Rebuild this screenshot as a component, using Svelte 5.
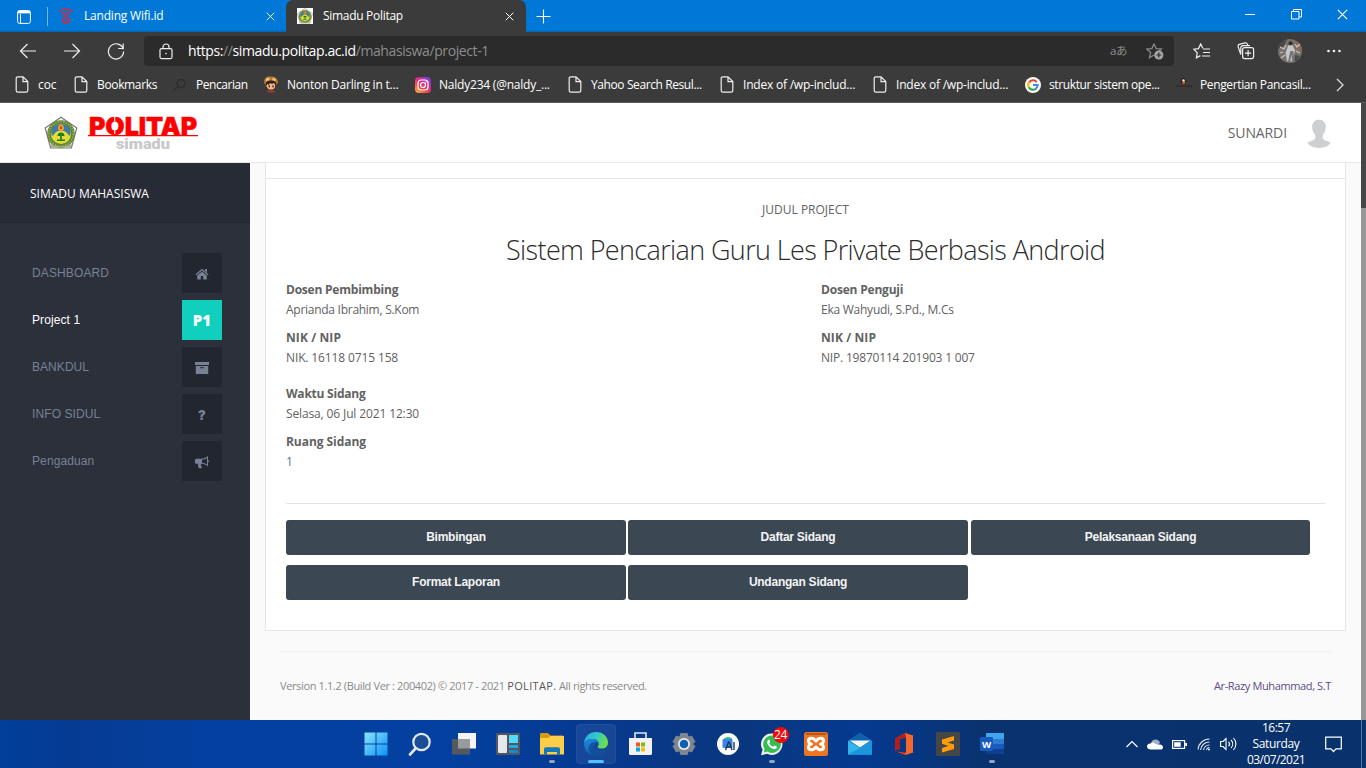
<script>
  const bookmarks = [
    { label: 'coc', icon: 'page', track: -0.1 },
    { label: 'Bookmarks', icon: 'page', track: -0.35 },
    { label: 'Pencarian', icon: 'search', track: -0.45 },
    { label: 'Nonton Darling in t...', icon: 'anime', track: -0.22 },
    { label: 'Naldy234 (@naldy_...', icon: 'insta', track: -0.22 },
    { label: 'Yahoo Search Resul...', icon: 'page', track: -0.4 },
    { label: 'Index of /wp-includ...', icon: 'page', track: -0.21 },
    { label: 'Index of /wp-includ...', icon: 'page', track: -0.21 },
    { label: 'struktur sistem ope...', icon: 'google', track: -0.37 },
    { label: 'Pengertian Pancasil...', icon: 'lamp', track: -0.37 }
  ];

  const menu = [
    { label: 'DASHBOARD', icon: 'home', track: 0.12 },
    { label: 'Project 1', icon: 'p1', active: true, track: 0.1 },
    { label: 'BANKDUL', icon: 'box', track: 0.05 },
    { label: 'INFO SIDUL', icon: 'help', track: 0.1 },
    { label: 'Pengaduan', icon: 'horn', track: 0.1 }
  ];

  const columns = [
    [
      { name: 'Dosen Pembimbing', value: 'Aprianda Ibrahim, S.Kom', a: -0.22, b: -0.27 },
      { name: 'NIK / NIP', value: 'NIK. 16118 0715 158', a: 0.1, b: -0.13 }
    ],
    [
      { name: 'Dosen Penguji', value: 'Eka Wahyudi, S.Pd., M.Cs', a: -0.2, b: -0.25 },
      { name: 'NIK / NIP', value: 'NIP. 19870114 201903 1 007', a: 0.1, b: -0.19 }
    ]
  ];

  const schedule = [
    { name: 'Waktu Sidang', value: 'Selasa, 06 Jul 2021 12:30', a: -0.23, b: -0.13 },
    { name: 'Ruang Sidang', value: '1', a: -0.05, b: 0, link: true }
  ];

  const actions = ['Bimbingan', 'Daftar Sidang', 'Pelaksanaan Sidang', 'Format Laporan', 'Undangan Sidang'];

  const apps = [
    'start', 'search', 'tasks', 'widgets', 'folder', 'edge', 'store', 'settings',
    'studio', 'whatsapp', 'xampp', 'mail', 'office', 'sublime', 'word'
  ];
  const running = ['folder', 'whatsapp', 'word'];
</script>

{#snippet crest()}
  <svg class="crest" viewBox="0 0 34 34">
    <path d="M17 1.2 32.8 12 27.4 32H6.6L1.2 12Z" fill="#fff" stroke="#777" stroke-width="1.2" />
    <circle cx="17" cy="18" r="13.8" fill="#5d8540" />
    <circle cx="17" cy="18" r="12.2" fill="none" stroke="#a9b83a" stroke-width="1.4" stroke-dasharray="1.4 1.3" />
    <circle cx="17" cy="18" r="10" fill="#e3dc35" />
    <path d="M8 20C6 11 11 8 17 8.500c6-.5 11 2.500 9 11.500-2-1-3-4-6-5h-6c-3 1-4 4-6 5Z" fill="#3f78ab" />
    <circle cx="17" cy="12" r="3" fill="#f4a91c" />
    <circle cx="17" cy="11.800" r="1.300" fill="#d8331c" />
    <path d="M17 16.500c2.500 0 3.500 1.800 3.500 3.500h-2.700v3.500H21V25h-8v-1.500h3.200V20h-2.700c0-1.700 1-3.500 3.500-3.500Z" fill="#237a25" />
    <path d="M6 27.500c5 3.500 17 3.500 22 0L26.800 31.300H7.200Z" fill="#a9ad86" />
  </svg>
{/snippet}

{#snippet x(size)}
  <svg width={size} height={size} viewBox="0 0 10 10" stroke="#fff" stroke-width="1.1"><path d="M.8.8l8.400 8.400M9.200.8.8 9.200" /></svg>
{/snippet}

<div class="screen">
  <header class="tabs">
    <div class="cell workspace">
      <svg width="14" height="14" viewBox="0 0 14 14" fill="none" stroke="#fff"><rect x=".6" y=".6" width="12.800" height="12.800" rx="2" /><path d="M.8 2.700h12.400M3.500 4v9" /><path d="M1 2h12" stroke-width="2.500" /></svg>
    </div>
    <div class="tab">
      <svg width="16" height="18" viewBox="0 0 16 18" fill="none" stroke="#d42b3e"><path d="M1.500 5c3-4.200 10-4.200 13 0M3.600 7c2-2.900 6.800-2.900 8.800 0M5.600 9c1-1.800 3.800-1.800 4.800 0" stroke-width="1.400" /><circle cx="8" cy="13.300" r="3" stroke-width="1.600" /><circle cx="8" cy="13.300" r=".7" /></svg>
      <span style:letter-spacing="-.2px">Landing Wifi.id</span>
      {@render x(9)}
    </div>
    <div class="tab open">
      <i class="favicon">{@render crest()}</i>
      <span style:letter-spacing="-.3px">Simadu Politap</span>
      {@render x(9)}
    </div>
    <div class="cell plus"><svg width="15" height="15" viewBox="0 0 15 15" stroke="#fff" stroke-width="1.100"><path d="M7.500.5v14M.5 7.500h14" /></svg></div>
    <div class="window">
      <svg width="10" height="10" viewBox="0 0 10 10" stroke="#fff"><path d="M0 5.500h10" /></svg>
      <svg width="11" height="11" viewBox="0 0 11 11" fill="none" stroke="#fff"><path d="M.5 2.500h7.500v7.500H.5ZM2.500 2.500V.5h8V8H8" /></svg>
      {@render x(11)}
    </div>
  </header>

  <nav class="toolbar">
    <div class="cell"><svg width="18" height="16" viewBox="0 0 18 16" fill="none" stroke="#eee" stroke-width="1.200"><path d="M17 8H1.500M8.500 1l-7 7 7 7" /></svg></div>
    <div class="cell"><svg width="18" height="16" viewBox="0 0 18 16" fill="none" stroke="#eee" stroke-width="1.200"><path d="M1 8h15.500M9.500 1l7 7-7 7" /></svg></div>
    <div class="cell"><svg width="18" height="18" viewBox="0 0 18 18" fill="none" stroke="#eee" stroke-width="1.200"><path d="M16.300 7.300A7.600 7.600 0 1 0 16.600 9.500M16.200 1.500v5h-5" /></svg></div>
    <div class="address">
      <svg width="14" height="17" viewBox="0 0 14 17" fill="none" stroke="#eee" stroke-width="1.200"><rect x="1" y="5.600" width="12" height="10" rx="1.500" /><path d="M4 5.500V4a3 3 0 0 1 6 0v1.500" /><circle cx="7" cy="10.600" r=".8" fill="#eee" stroke="none" /></svg>
      <span class="url"><b>https:</b>//<b>simadu.politap.ac.id</b>/mahasiswa/project-1</span>
      <span class="translate">aあ</span>
      <svg width="18" height="17" viewBox="0 0 18 17"><path d="M8 .8l2.100 4.800 5.300.4-4 3.500M8 .8 5.900 5.600.700 6l4 3.500-1.300 5.300L8 12" fill="none" stroke="#8d8d8d" stroke-width="1.200" /><circle cx="12.800" cy="12" r="4.600" fill="#a5a5a5" /><path d="M12.800 9.600v4.800M10.400 12h4.800" stroke="#2b2b2b" stroke-width="1.200" /></svg>
    </div>
    <div class="cell"><svg width="18" height="17" viewBox="0 0 18 17" fill="none" stroke="#eee" stroke-width="1.200"><path d="M9.800 5.300 7.700.9 5.500 5.600.8 6.200l3.400 3.500-.8 5.100 4-2.200M10 6h7M10 9.500h7M9 13h8" /></svg></div>
    <div class="cell"><svg width="18" height="18" viewBox="0 0 18 18" fill="none" stroke="#eee" stroke-width="1.200"><rect x="5.600" y="5.600" width="11" height="11" rx="2" /><path d="M11.100 8v6.200M8 11.100h6.200M3.800 12.500 1.200 5C.8 3.500 1.200 2.800 2.300 2.400L8 .9c1.200-.2 2 .2 2.400 1.200l.6 1.500M3.800 12.500V6c0-1.500 1-2.400 2.500-2.400H13" /></svg></div>
    <div class="cell"><svg width="24" height="24" viewBox="0 0 24 24"><clipPath id="round"><circle cx="12" cy="12" r="12" /></clipPath><g clip-path="url(#round)"><path fill="#77716b" d="M0 0h24v24H0z" /><path d="M0 0h9L6 7 0 10Z" fill="#4a494a" /><path d="M16 2h8v9l-5-2Z" fill="#8f6558" /><path d="M2 8l4 2 2-4M17 5l2 3 3-3M3 19l4-3M18 12l4 2M2 14l3-1" stroke="#c8c4bd" stroke-width="1.200" fill="none" /><circle cx="12.500" cy="4.200" r="2" fill="#332a28" /><path d="M10 6.500l4.500-.2 2.500 5-1 5-1.500 6H9L7.500 14Z" fill="#c6c5c7" /><path d="M12.200 12 10 23h2.200l1-7 1.300 7h2l-1-11Z" fill="#77777c" /><path d="M17 16l5 1-3 5h-2.500Z" fill="#4a4d4b" /></g></svg></div>
    <div class="cell"><svg width="14" height="4" viewBox="0 0 14 4" fill="#eee"><circle cx="1.500" cy="2" r="1.300" /><circle cx="7" cy="2" r="1.300" /><circle cx="12.500" cy="2" r="1.300" /></svg></div>
  </nav>

  <nav class="bookmarks">
    {#each bookmarks as b}
      <div class="bookmark">
        <i>
          {#if b.icon === 'page'}
            <svg width="16" height="17" viewBox="0 0 16 17" fill="none" stroke="#eee" stroke-width="1.200"><path d="M9 .8H4C2.700.8 2.200 1.500 2.200 2.500v12c0 1 .5 1.700 1.800 1.700h8c1.200 0 1.800-.7 1.800-1.700v-9ZM9 .8v4.900h4.800" /></svg>
          {:else if b.icon === 'search'}
            <svg width="16" height="16" viewBox="0 0 16 16" fill="none" stroke="#2c2c2c" stroke-width="1.300"><circle cx="9" cy="6.500" r="4" /><path d="m6 9.500-4 4" /></svg>
          {:else if b.icon === 'anime'}
            <svg width="16" height="17" viewBox="0 0 16 17"><path d="M1 6C1 2 4 0 8 .5c5-.3 7 3 7 6.500l-2 2-10 2Z" fill="#b47b2d" /><path d="M3 2.500l3-1 1 3-4 1ZM10 1.500l3 2-1 2-3-1Z" fill="#ebc77b" /><circle cx="8" cy="9.500" r="4.300" fill="#efb98c" /><path d="M2.500 11c0-6 2-6.500 5.500-6.500s6 1 5.500 6.500l-2.500-4-2 1-2-1-1 2-1.500-1Z" fill="#382015" /><path d="M5.500 9.500H7v1.800H5.500ZM9.300 9.500h1.500v1.800H9.300Z" fill="#382015" /><path d="M4 16.500c0-2.500 2-3 4-3s4 .5 4 3Z" fill="#923d28" /></svg>
          {:else if b.icon === 'insta'}
            <svg width="16" height="16" viewBox="0 0 16 16"><defs><linearGradient id="ig" x1="0" y1="1" x2=".8" y2="0"><stop stop-color="#ffc24a" /><stop offset=".35" stop-color="#f7503f" /><stop offset=".65" stop-color="#d32c91" /><stop offset="1" stop-color="#7a3fd0" /></linearGradient></defs><rect width="16" height="16" rx="4" fill="url(#ig)" /><g fill="none" stroke="#fff" stroke-width="1.200"><rect x="3" y="3" width="10" height="10" rx="3" /><circle cx="8" cy="8" r="2.500" /></g><circle cx="11" cy="5" r=".7" fill="#fff" /></svg>
          {:else if b.icon === 'google'}
            <svg width="16" height="16" viewBox="0 0 16 16"><circle cx="8" cy="8" r="8" fill="#fff" /><g fill="none" stroke-width="2.100"><path d="M11.700 5A4.700 4.700 0 0 0 4 5.500" stroke="#e94335" /><path d="M4 5.400a4.700 4.700 0 0 0 0 5.200" stroke="#fabb05" /><path d="M3.900 10.400a4.700 4.700 0 0 0 7.300 1" stroke="#34a853" /><path d="M11 11.500c1-.8 1.700-2 1.700-3.500H8" stroke="#4285f4" /></g></svg>
          {:else}
            <svg width="16" height="16" viewBox="0 0 16 16"><path d="M0 8.500h16v1.200H0z" fill="#2a2a2a" /><ellipse cx="7.500" cy="4.500" rx="2.600" ry="3.600" fill="#2e1712" /><circle cx="7.500" cy="3.500" r="1.300" fill="#f5ead5" /><path d="M6 5h3l-.5 2.500h-2Z" fill="#d8502a" /><circle cx="8.700" cy="5.200" r=".8" fill="#60b33d" /></svg>
          {/if}
        </i>
        <span style:letter-spacing="{b.track}px">{b.label}</span>
      </div>
    {/each}
    <svg class="more" width="8" height="14" viewBox="0 0 8 14" fill="none" stroke="#ddd" stroke-width="1.300"><path d="m1 1 6 6-6 6" /></svg>
  </nav>

  <div class="viewport">
    <div class="site">
      <header class="masthead">
        <div class="brand">
          {@render crest()}
          <svg class="wordmark" width="112" height="37" viewBox="0 0 112 37">
            <text x="1" y="20.700" textLength="108" lengthAdjust="spacingAndGlyphs" class="politap">POLITAP</text>
            <path d="M26.700 2v5.500M26.700 15v5" stroke="#fff" stroke-width="1.100" />
            <path d="M0 21.700h110" stroke="#f00" stroke-width="1.300" />
            <text x="28" y="34.500" textLength="54" lengthAdjust="spacingAndGlyphs" class="simadu">simadu</text>
          </svg>
        </div>
        <div class="user">
          <span>SUNARDI</span>
          <svg width="24" height="30" viewBox="0 0 24 30" fill="#cdcfd1"><path d="M12 .8c4.200 0 6.800 2.700 6.800 7 0 3.600-1.200 6.200-3 8-.6 3.500.2 5 2.600 5.700 2 .6 4 1 5.200 2.600C21 27.500 17 29 12 29S3 27.500.4 24.100c1.200-1.600 3.200-2 5.200-2.600 2.400-.7 3.200-2.200 2.600-5.700-1.800-1.800-3-4.400-3-8 0-4.300 2.600-7 6.800-7Z" /></svg>
        </div>
      </header>

      <div class="body">
        <aside>
          <div class="heading">SIMADU MAHASISWA</div>
          <ul>
            {#each menu as m}
              <li class:active={m.active}>
                <span style:letter-spacing="{m.track}px">{m.label}</span>
                <i>
                  {#if m.icon === 'home'}
                    <svg width="14" height="12" viewBox="0 0 14 12"><path d="M7 .8 13.500 6.300l-.8.9L7 2.500 1.300 7.200l-.8-.9ZM10 1h2v3.500l-2-1.700ZM7 3.400l4.800 4v4.100H8.200V8H5.800v3.500H2.200V7.400Z" /></svg>
                  {:else if m.icon === 'p1'}
                    P1
                  {:else if m.icon === 'box'}
                    <svg width="14" height="12" viewBox="0 0 14 12"><path fill-rule="evenodd" d="M0 0h14v3H0ZM.8 4h12.400v8H.8ZM5 5.200v1h4v-1Z" /></svg>
                  {:else if m.icon === 'help'}
                    <b>?</b>
                  {:else}
                    <svg width="14" height="13" viewBox="0 0 14 13"><path fill-rule="evenodd" d="M13 0v4.200a1 1 0 0 1 0 2V10.500C11 8.800 8.800 8 6.500 7.800c-1 .5-.8 1.400-.2 1.800-.5.9.2 1.300.8 2-.7 1-2.600 1-3.400.3-.4-1.300-1-2.500-.5-4.200H1.500C.6 7.700 0 7.200 0 6.200V4.300C0 3.400.6 2.700 1.500 2.700H6C8.700 2.700 11 1.600 13 0ZM12 2C10.300 3.100 8.700 3.600 7 3.700v3.100c1.700.1 3.300.7 5 1.800Z" /></svg>
                  {/if}
                </i>
              </li>
            {/each}
          </ul>
        </aside>

        <main>
          <section class="card">
            <div class="strip"></div>
            <div class="content">
              <p class="kicker">JUDUL PROJECT</p>
              <h1>Sistem Pencarian Guru Les Private Berbasis Android</h1>
              <div class="pair">
                {#each columns as col}
                  <dl>
                    {#each col as f}
                      <dt style:letter-spacing="{f.a}px">{f.name}</dt>
                      <dd style:letter-spacing="{f.b}px">{f.value}</dd>
                    {/each}
                  </dl>
                {/each}
              </div>
              <dl class="schedule">
                {#each schedule as f}
                  <dt style:letter-spacing="{f.a}px">{f.name}</dt>
                  <dd class:link={f.link} style:letter-spacing="{f.b}px">{f.value}</dd>
                {/each}
              </dl>
              <hr />
              <div class="actions">
                {#each actions as a}<button>{a}</button>{/each}
              </div>
            </div>
          </section>
          <footer>
            <span>Version 1.1.2 (Build Ver : 200402) © 2017 - 2021 <b>POLITAP.</b> All rights reserved.</span>
            <span class="author">Ar-Razy Muhammad, S.T</span>
          </footer>
        </main>
      </div>
    </div>
    <div class="scrollbar"><div></div></div>
  </div>

  <footer class="taskbar">
    <div class="apps">
      {#each apps as a}
        <div class="app" class:focused={a === 'edge'} class:running={running.includes(a)}>
          {#if a === 'start'}
            <svg viewBox="0 0 24 24"><defs><linearGradient id="win" x1="0" y1="0" x2="1" y2="1"><stop stop-color="#8ce4ff" /><stop offset="1" stop-color="#0a93f5" /></linearGradient></defs><path fill="url(#win)" d="M.5.500h11v11H.5ZM12.500.5h11v11h-11ZM.5 12.500h11v11H.5ZM12.500 12.500h11v11h-11Z" /></svg>
          {:else if a === 'search'}
            <svg viewBox="0 0 24 24" fill="none" stroke="#e3e7ef"><circle cx="13.500" cy="10" r="8.200" stroke-width="2.200" fill="#1c4e96" /><path d="m7.500 16.500-5.500 6" stroke-width="2.600" stroke-linecap="round" /></svg>
          {:else if a === 'tasks'}
            <svg viewBox="0 0 24 24"><path fill="#f4f4f6" d="M6 1h18v15.500H6z" /><path fill="#55585c" d="M0 7h18v15.500H0z" /><path fill="#989a9e" d="M6 7h12v9.500H6z" /></svg>
          {:else if a === 'widgets'}
            <svg viewBox="0 0 24 24"><rect y="1" width="24" height="22" rx="1" fill="#53575d" /><rect x="2" y="3" width="9" height="18" rx="1" fill="#e5e7ea" /><path fill="#50dcff" d="M13 3h9v8h-9z" /><path fill="#25abe5" d="M13 13h9v3h-9z" /><path fill="#158cd2" d="M13 18h9v3h-9z" /></svg>
          {:else if a === 'folder'}
            <svg viewBox="0 0 24 24"><path d="M0 2.500C0 1.500.5 1 1.500 1H8l2.500 2.500H22c1 0 2 .5 2 1.500v5H0Z" fill="#d99a08" /><path d="M0 6h8l2.500-2H24v18.500H0Z" fill="#fccd46" /><path d="M4 22.500V17c0-1 .8-1.700 2-1.700h12c1.200 0 2 .7 2 1.700v5.500h-3V20H7v2.500Z" fill="#1477bf" /></svg>
          {:else if a === 'edge'}
            <svg viewBox="0 0 24 24"><defs><linearGradient id="e1" x1="0" y1="0" x2="1" y2=".3"><stop stop-color="#2ba7e8" /><stop offset=".55" stop-color="#34c9c9" /><stop offset="1" stop-color="#6bdf4b" /></linearGradient><linearGradient id="e2" x1="0" y1="0" x2=".5" y2="1"><stop stop-color="#1b8bdd" /><stop offset="1" stop-color="#115bab" /></linearGradient></defs><path d="M0 11C.5 4.500 5.500 0 12 0c7 0 12 4.800 12 10.500 0 4-3 6-6.500 6-2.500 0-4-.8-4-1.600 0-.6 1.200-1.100 1.200-3C14.700 9 12 7 8.500 7 4 7 1 9 0 11Z" fill="url(#e1)" /><path d="M0 12C.3 9 3.500 7 8 7c3.500 0 6.500 2 6.700 4.800-.6-1-1.600-1.800-2.700-1.800-2 1-3 3-3 5 0 4 5 6 12.500 3-2 3.700-5.500 6-9.500 6C5 24 0 18.500 0 12Z" fill="url(#e2)" /><path d="M8.500 23.300C4.500 21 3.500 16 6 12.500c1.300-1.700 3.300-2.500 6-2.500-2 1-3 3-3 5 0 4.500 5 6.500 12.500 3-3 5-8 6.500-13 5.300Z" fill="#0d4a96" opacity=".75" /></svg>
          {:else if a === 'store'}
            <svg viewBox="0 0 24 24"><path d="M7 7V1h11v6" fill="none" stroke="#dfe7ef" stroke-width="1.600" /><path d="M1 6h23v15.500c0 1-.8 1.500-1.800 1.500H2.800C1.800 23 1 22.500 1 21.500Z" fill="#f2f2f4" /><path fill="#f35325" d="M8 10.500h4v4H8z" /><path fill="#81bc06" d="M13 10.500h4v4h-4z" /><path fill="#05a6f0" d="M8 15.500h4v4H8z" /><path fill="#ffba08" d="M13 15.500h4v4h-4z" /></svg>
          {:else if a === 'settings'}
            <svg viewBox="0 0 24 24"><path d="M8.500 1h7l1 3.500 3.500-.7 3.500 6L21 12l2.500 2.300-3.500 6-3.500-.8-1 3.500h-7l-1-3.500-3.500.8-3.500-6L3 12 .5 9.800l3.500-6 3.500.7Z" fill="#80868f" /><circle cx="12" cy="12" r="6" fill="#e8edf3" /><circle cx="12" cy="12" r="4.300" fill="#1060b4" /></svg>
          {:else if a === 'studio'}
            <svg viewBox="0 0 24 24"><circle cx="12" cy="12" r="11" fill="#fff" /><path d="M8 6.500c2-2 6-2 8 0V8H8Z" fill="#31c485" /><rect x="6.500" y="7" width="10" height="9" rx="1" fill="#3f82eb" /><path d="m9.500 18 3-8 1 .5 2.500 7.500M18 10v8M11 15h4" fill="none" stroke="#153b5b" stroke-width="1.400" /></svg>
          {:else if a === 'whatsapp'}
            <svg viewBox="0 0 24 24"><path d="M12 1.500A10.700 10.700 0 1 1 7 21.800L1 23.300l1.600-5.500A10.700 10.700 0 0 1 12 1.500Z" fill="#eef5ef" /><path d="M12 3.500a8.700 8.700 0 1 1-4.600 16l-3.700 1 1-3.500A8.700 8.700 0 0 1 12 3.500Z" fill="#34be51" /><path d="M9 7.500c.8 0 1 1.800 1.200 2.300 0 .6-1 1.100-.8 1.600.9 1.600 2.100 2.700 3.700 3.300.5.100 1-1.100 1.500-1.100.5.100 2.300.9 2.300 1.300-.1 1.600-1.600 2.400-3 2.200-3.500-.7-6-3.300-6.800-6.300C7 9.500 8 7.500 9 7.500Z" fill="#fff" /></svg>
            <em>24</em>
          {:else if a === 'xampp'}
            <svg viewBox="0 0 24 24"><rect width="24" height="24" rx="2.500" fill="#ed7522" /><path d="M2 1h20v2H2z" fill="#b9571a" /><path d="M12 9C9 5 4.500 5.500 4.500 8.800c0 2 1.500 3.200 3 3.200-1.500 0-3 1.200-3 3.200 0 3.300 4.500 3.800 7.500-.2 3 4 7.500 3.500 7.500.2 0-2-1.500-3.200-3-3.200 1.500 0 3-1.200 3-3.200C19.500 5.500 15 5 12 9Z" fill="none" stroke="#fff" stroke-width="3" stroke-linejoin="round" /></svg>
          {:else if a === 'mail'}
            <svg viewBox="0 0 24 24"><path d="M0 8.500 12 .500l12 8v14H0Z" fill="#0c62ad" /><path d="M0 8.500 12 16l12-7.500v14H0Z" fill="#32b5ed" /><path d="M0 22.500 24 9v13.500Z" fill="#1996dc" /><path d="M1.500 8.500h21L12 15.500Z" fill="#f4f7fa" /></svg>
          {:else if a === 'office'}
            <svg viewBox="0 0 24 24"><path d="M3 6.500 13 1l8 2.500v17L13 23l-9-3.500 10 1V5.500L8 7v9.500l-5 2.300Z" fill="#d83b20" /><path d="M13 1l8 2.500v17L13 23l1-2.500v-15Z" fill="#f4692b" /><path d="M3 6.500 13 1l1 4.500L8 7v9.500l-5 2.300Z" fill="#b51d1d" /></svg>
          {:else if a === 'sublime'}
            <svg viewBox="0 0 24 24"><rect width="24" height="24" rx="1.500" fill="#464646" /><path d="M18 4v4.500l-6.500 2L18 12.500V17L6 20.500V16l6.300-2L6 11.800V7.500Z" fill="#ff9d0a" /></svg>
          {:else}
            <svg viewBox="0 0 24 24"><path fill="#41a5ee" d="M6 1h18v6H6z" /><path fill="#2b7cd3" d="M6 7h18v5H6z" /><path fill="#185abd" d="M6 12h18v5H6z" /><path fill="#103f91" d="M6 17h18v5H6z" /><rect y="5" width="13" height="14" rx="1" fill="#185abd" /><text x="6.500" y="15.500" text-anchor="middle" class="w">W</text></svg>
          {/if}
        </div>
      {/each}
    </div>
    <div class="tray">
      <svg width="12" height="8" viewBox="0 0 12 8" fill="none" stroke="#fff" stroke-width="1.200"><path d="m.5 7 5.500-5.500L11.500 7" /></svg>
      <svg width="16" height="11" viewBox="0 0 16 11"><path d="M4 5c0-3 2-4.500 4.500-4.500 2.300 0 4 1.500 4.500 3.500l-4 3Z" fill="#9fb0ca" /><path d="M4 10.500C1.500 10.500 0 9.300 0 7.500S1.500 4.300 3.500 4.500C5 3 7 3.300 8.500 5l3 .6c2.700-.6 4.500.8 4.500 2.600 0 1.500-1 2.300-2.500 2.300Z" fill="#fff" /></svg>
      <svg width="15" height="9" viewBox="0 0 15 9"><rect x=".6" y=".6" width="12" height="7.800" fill="none" stroke="#fff" stroke-width="1.200" /><path d="M2.200 2.200h6.500v4.600H2.200ZM13.200 3H15v3h-1.800Z" fill="#fff" /></svg>
      <svg class="wifi" width="14" height="14" viewBox="0 0 14 14" fill="none" stroke="#dce5f2" stroke-width="1.100"><path d="M1 12.500A11.500 11.500 0 0 1 12.500 2M3.500 13A9 9 0 0 1 12.500 5M6.500 13a6 6 0 0 1 6-5M9.500 13a3 3 0 0 1 3-2.500" /><circle cx="12" cy="12.500" r="1" fill="#fff" stroke="none" /></svg>
      <svg width="17" height="14" viewBox="0 0 17 14" fill="none" stroke="#fff" stroke-width="1.100"><path d="M.6 4.500H3L6 1.500v11l-3-3H.6ZM8.500 4.800c1.200 1.200 1.200 3.200 0 4.400M11 3c2.200 2.300 2.200 5.700 0 8M13.500 1c3.200 3.500 3.200 8.500 0 12" /></svg>
      <div class="clock"><span style:letter-spacing="-.5px">16:57</span><span style:letter-spacing="-.35px">Saturday</span><span style:letter-spacing="-.57px">03/07/2021</span></div>
      <svg class="notice" width="17" height="17" viewBox="0 0 17 17" fill="none" stroke="#fff" stroke-width="1.200"><path d="M.7 1.200h15.600v11.600H11l-2.500 2.700L6 12.800H.7Z" /></svg>
      <i class="edge-line"></i>
    </div>
  </footer>
</div>

<style>
  :global(body) { margin: 0; overflow: hidden; }
  * { box-sizing: border-box; }
  svg { display: block; flex: none; }
  i, em { font-style: normal; }
  .screen { width: 1366px; height: 768px; display: flex; flex-direction: column; overflow: hidden; font: 12px/16px 'Open Sans', 'Noto Sans', sans-serif; color: #fff; white-space: nowrap; }
  .cell { width: 44px; flex: none; display: flex; align-items: center; justify-content: center; }

  .tabs { height: 32px; flex: none; display: flex; background: #0078d7; box-shadow: inset 0 -2px 2px -1px #0062b5; }
  .tabs .workspace { width: 48px; padding-left: 1px; border-right: 1px solid #70b6ee; margin: 7px 0 6px; }
  .tab { width: 238px; display: flex; align-items: center; padding: 0 11px 0 10px; }
  .tab span { flex: 1; margin-left: 10px; }
  .tab.open { width: 240px; background: #3b3b3b; border-radius: 7px 7px 0 0; padding: 0 12px 0 11px; }
  .favicon { width: 16px; height: 16px; background: #fff; }
  .favicon .crest { width: 16px; height: 16px; }
  .plus { width: 34px; }
  .window { margin-left: auto; width: 121px; height: 28px; padding: 0 18px 0 0; display: flex; align-items: center; justify-content: space-between; }

  .toolbar { height: 38px; flex: none; display: flex; padding-left: 6px; background: #3b3b3b; }
  .address { width: 1030px; height: 30px; margin: 4px 6px 4px 6px; padding: 0 10px 0 15px; display: flex; align-items: center; border-radius: 4px; background: #2b2b2b; }
  .url { flex: 1; margin-left: 15px; font-size: 14px; letter-spacing: -.4px; color: #8d8d8d; }
  .url b { font-weight: 400; color: #fff; }
  .translate { margin-right: 19px; font: 11.500px/18px 'Open Sans', 'Noto Sans CJK JP', sans-serif; letter-spacing: -.5px; color: #8d8d8d; }

  .bookmarks { height: 33px; flex: none; display: grid; grid-template-columns: 59px 99px 91px 152px 152px 152px 153px 153px 151px 160px auto; align-items: center; padding: 0 0 3px 14px; background: #3b3b3b; border-bottom: 1px solid #5c5c5c; }
  .bookmark { display: flex; align-items: center; gap: 8px; }

  .viewport { height: 617px; flex: none; display: flex; }
  .site { width: 1361px; display: flex; flex-direction: column; }
  .scrollbar { width: 5px; background: #979797; }
  .scrollbar div { height: 105px; background: #474747; }
  .masthead { height: 60px; flex: none; display: flex; align-items: center; justify-content: space-between; padding: 0 30px 0 44px; background: #fff; border-bottom: 1px solid #e9e9e9; }
  .brand { display: flex; align-items: center; gap: 10px; }
  .crest { width: 34px; height: 34px; }
  .wordmark { overflow: visible; }
  .politap { font: 900 24.500px 'Inter', sans-serif; fill: #f00; stroke: #f00; stroke-width: .5px; }
  .simadu { font: 900 15px 'Roboto', sans-serif; fill: #c8c8c8; }
  .user { display: flex; align-items: center; gap: 20px; font-size: 14px; letter-spacing: -.1px; color: #666; }
  .user svg { margin-top: 2px; }

  .body { flex: 1; display: flex; min-height: 0; }
  aside { width: 250px; background: #2b303b; }
  .heading { height: 60px; padding: 0 0 0 30px; line-height: 61px; background: #272b35; border-bottom: 1px solid #22262f; }
  ul { margin: 0; padding: 30px 28px 0 32px; list-style: none; display: grid; gap: 7px; }
  li { display: flex; align-items: center; justify-content: space-between; height: 40px; font: 12px/16px 'Liberation Sans', sans-serif; color: #788195; }
  li i { width: 40px; height: 40px; display: flex; align-items: center; justify-content: center; background: #22262e; fill: #788195; }
  li i svg { margin-top: 2px; }
  li i b { font: 900 13px 'Inter', sans-serif; margin-top: 2px; }
  .active { color: #fff; }
  .active i { background: #10cfbd; font: 800 15px 'Open Sans', sans-serif; color: #fff; }

  main { flex: 1; padding: 0 15px; background: #fafafa; color: #626262; }
  .card { height: 468px; background: #fff; border: 1px solid #e6e6e6; border-top: 0; }
  .strip { height: 16px; border-bottom: 1px solid #e6e6e6; }
  .content { padding: 23px 20px 0; }
  .kicker { margin: 0; line-height: 16px; text-align: center; }
  h1 { margin: 13px 0 0; font-size: 27px; line-height: 38px; font-weight: 300; letter-spacing: -.63px; text-align: center; color: #2c2c2c; }
  .pair { display: grid; grid-template-columns: 535px 1fr; margin-top: 11px; }
  dl { margin: 0; }
  dt { font-weight: 700; line-height: 20px; }
  dd { margin: 0 0 8px; line-height: 20px; }
  .link { color: #54789f; }
  .schedule { margin-top: 8px; }
  hr { height: 1px; margin: 31px 0 16px; border: 0; background: #e2e2e2; }
  .actions { display: grid; grid-template-columns: 340px 340px 340px; gap: 10px 2px; }
  button { height: 35px; padding: 0 0 2px; border: 0; border-radius: 3px; background: #3b4752; color: #f4f4f4; font: 700 12px 'Liberation Sans', sans-serif; letter-spacing: -.25px; }
  button:nth-child(3) { margin-left: 1px; }
  main footer { height: 69px; margin: 20px 15px 0; border-top: 1px solid #efefef; display: flex; justify-content: space-between; padding-top: 26px; font-size: 11px; letter-spacing: -.37px; color: #8a8a8a; }
  main footer b { font-weight: 400; letter-spacing: .35px; color: #555; }
  .author { color: #5c4b8a; }

  .taskbar { height: 48px; flex: none; display: flex; align-items: center; padding-left: 353.500px; background: linear-gradient(90deg, #003f9c 0, #063b93 5%, #0440a0 15%, #03409f 33%, #063a92 42%, #0a367e 54%, #053a90 63%, #0a326f 72%, #09326c 100%); }
  .apps { display: flex; }
  .app { position: relative; width: 44px; height: 48px; display: flex; align-items: center; justify-content: center; }
  .app svg { width: 24px; height: 24px; position: relative; z-index: 1; }
  .app.focused::before { content: ''; position: absolute; inset: 4px 2px; border-radius: 4px; background: #fff1; border: 1px solid #ffffff0c; }
  .app.focused::after, .app.running::after { content: ''; position: absolute; bottom: 5px; width: 6px; height: 3px; border-radius: 2px; background: #8fa6cb; }
  .app.focused::after { width: 16px; background: #4cc2ff; }
  .app em { position: absolute; z-index: 2; left: 23px; top: 7px; width: 16px; height: 16px; border-radius: 50%; background: #f00a0a; font-size: 12px; line-height: 16px; text-align: center; letter-spacing: -.4px; }
  .w { font: 700 9.500px 'Open Sans', sans-serif; fill: #fff; }
  .tray { display: flex; align-items: center; margin-left: 112.500px; gap: 9px; }
  .wifi { margin-left: 1px; }
  .clock { width: 60px; display: flex; flex-direction: column; align-items: center; line-height: 16px; }
  .notice { margin-left: 10px; }
  .edge-line { width: 1px; height: 48px; margin-left: 10px; background: #5275a4; }
</style>
